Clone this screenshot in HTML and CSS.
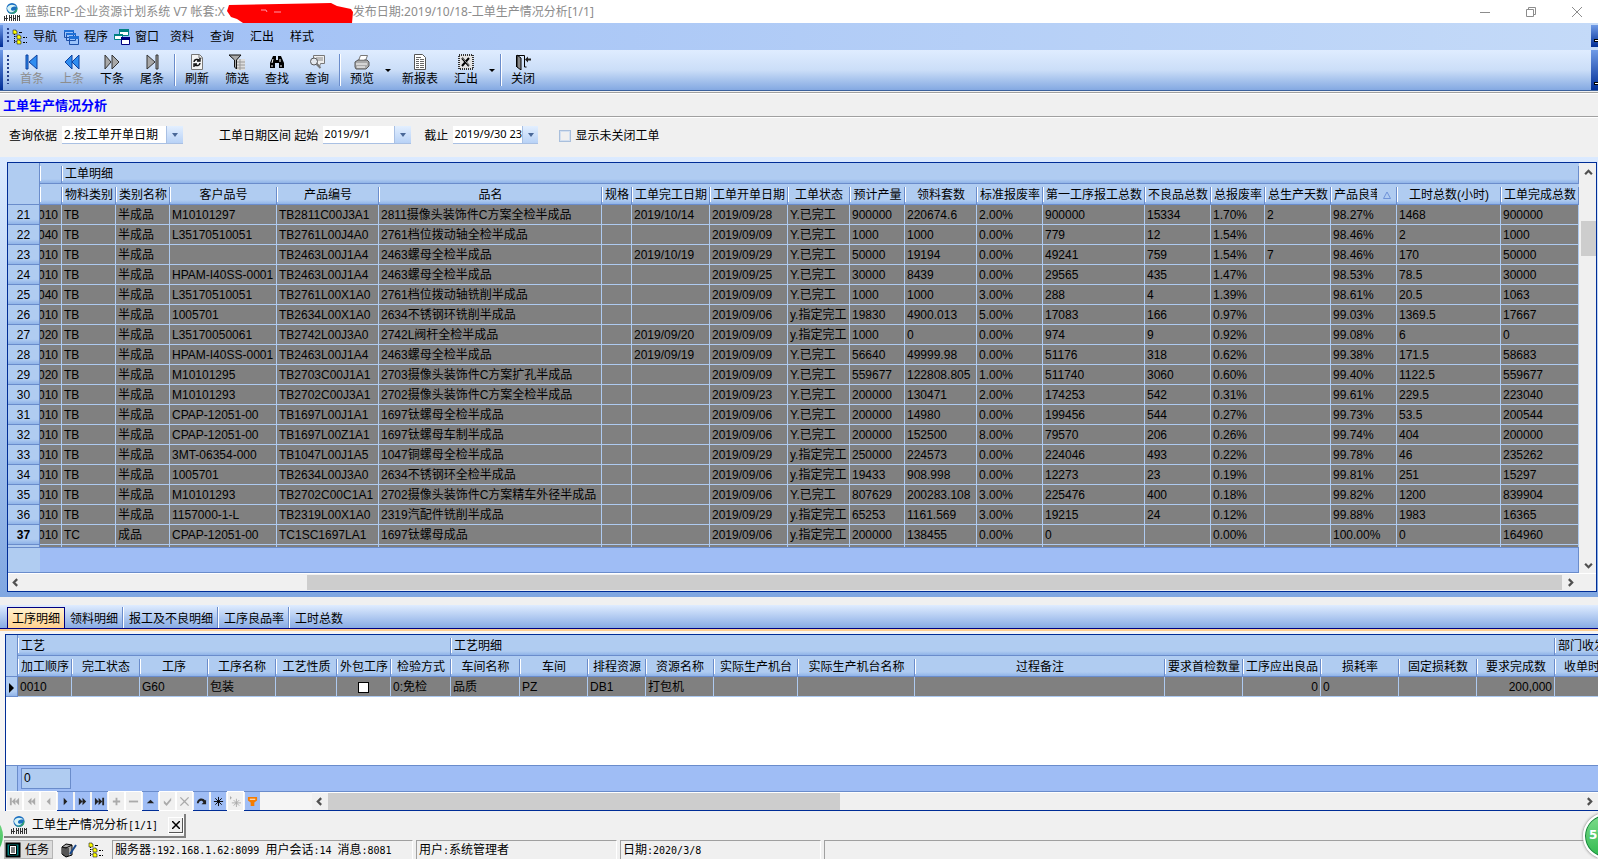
FILE: index.html
```html
<!DOCTYPE html>
<html lang="zh-CN">
<head>
    <meta charset="UTF-8">
    <meta name="viewport" content="width=device-width, initial-scale=1.0">
    <title>蓝鲸ERP-工单生产情况分析</title>
    <link rel="stylesheet" href="styles.css">
</head>
<body>
    <svg class="defs" aria-hidden="true">
        <symbol id="logo" viewBox="0 0 18 18">
            <circle cx="9" cy="5.500" r="5.500" fill="#1b6fc0"/>
            <path d="M4 5c2-4 7-4 10-1-3-1-6 0-6 2s2 2 4 1c-2 4-7 3-8-2z" fill="#d8f3f5"/>
            <path d="M5 9c4 2 8 0 9-5 2 5-4 9-9 5z" fill="#36a56a"/>
            <path d="M1.500 13v5M3.500 12v6M1 15.500h4M6.500 12v6M8.500 12v6M6 14.500h3M10.500 12v6M12.500 12v6M10 15.500h3M14.500 12v6M16.500 12v6M14 13.500h3" stroke="#333" fill="none"/>
        </symbol>
        <symbol id="tree" viewBox="0 0 16 16">
            <path d="M2.500 3v11M2.500 7.500h4M2.500 12.500h4" stroke="#000" stroke-dasharray="1 1" fill="none"/>
            <path d="M1 1h3v1h1v3H1zM5 6h3v1h1v3H5zM5 11h3v1h1v3H5z" fill="#ff0" stroke="#222" stroke-width=".6"/>
            <path d="M7 3.500h3M11 8.500h2M14 8.500h1M11 13.500h2M14 13.500h1" stroke="#000"/>
        </symbol>
    </svg>

    <header class="titlebar">
        <svg class="logo"><use href="#logo"/></svg>
        <span>蓝鲸ERP-企业资源计划系统 V7 帐套:X</span>
        <svg class="redact" viewBox="0 0 126 22"><path d="M2 2 104 0 110 3 124 6 126 9 125 20 88 21 70 20 16 20 10 16 4 14 0 8z" fill="#f00"/><path d="M34 7h5l1 2M47 9h7" stroke="#f9a" fill="none"/></svg>
        <span>发布日期:2019/10/18-工单生产情况分析[1/1]</span>
        <div class="win-btns">
            <button aria-label="最小化"><svg viewBox="0 0 12 12"><path d="M1 6.500h10"/></svg></button>
            <button aria-label="还原"><svg viewBox="0 0 12 12"><path d="M1.500 3.500h7v7h-7zM3.500 3.500v-2h7v7h-2"/></svg></button>
            <button aria-label="关闭窗口"><svg viewBox="0 0 12 12"><path d="M1 1l10 10M11 1L1 11"/></svg></button>
        </div>
    </header>

    <nav class="bar menubar">
        <i class="edge"></i>
        <i class="grip"></i>
        <button><svg><use href="#tree"/></svg>导航</button>
        <button><svg viewBox="0 0 16 16"><path d="M1.500 1.500h9v7h-9zM3.500 4.500h9v7h-9zM6.500 7.500h9v8h-9z" fill="#9cc3fa" stroke="#1c4fa8"/><path d="M1 1h10v2H1zM3 4h10v2H3zM6 7h10v3H6z" fill="#1f6fd6"/></svg>程序</button>
        <button><svg viewBox="0 0 16 16"><path d="M5.500.500h9v6h-9z" fill="#fff" stroke="#008080"/><path d="M5 0h10v3H5z" fill="#008080"/><path d="M.500 5.500h8v5h-8z" fill="#fff" stroke="#008080"/><path d="M0 5h9v2H0z" fill="#008080"/><path d="M7.500 8.500h8v7h-8z" fill="#fff" stroke="#000080"/><path d="M7 8h9v3H7z" fill="#000080"/></svg>窗口</button>
        <button class="plain">资料</button>
        <button class="plain">查询</button>
        <button class="plain">汇出</button>
        <button class="plain">样式</button>
        <i class="edge end"></i>
    </nav>

    <div class="bar toolbar">
        <i class="edge"></i>
        <i class="grip"></i>
        <button disabled><svg viewBox="0 0 16 16"><path d="M2 1h2v14H2zM13 1v14L5 8z" fill="#2f8df0" stroke="#0b3f9e"/></svg>首条</button>
        <button disabled><svg viewBox="0 0 16 16"><path d="M8 1v14L1 8zM15 1v14L8 8z" fill="#2f8df0" stroke="#0b3f9e"/></svg>上条</button>
        <button><svg viewBox="0 0 16 16"><path d="M1 1v14l6-7zM8 1v14l7-7z" fill="#a8a8a8" stroke="#333"/></svg>下条</button>
        <button><svg viewBox="0 0 16 16"><path d="M3 1v14l8-7zM12 1h2v14h-2z" fill="#a8a8a8" stroke="#333"/></svg>尾条</button>
        <i class="sep"></i>
        <button><svg viewBox="0 0 16 16"><path d="M2.500.500h8l3 3v12h-11z" fill="#f4f4f4" stroke="#777"/><path d="M10 1v3h3" fill="none" stroke="#777"/><path d="M5 8c0-3 4-3 5-2M11 4v3H8M11 9c0 3-4 3-5 2M5 13v-3h3" fill="none" stroke="#111" stroke-width="1.400"/></svg>刷新</button>
        <button><svg viewBox="0 0 16 16"><path d="M7 5h9v11H7z" fill="#ddd"/><path d="M7 8h9M7 11h9M7 14h9M11 5v11" stroke="#999"/><path d="M0 1h12L7.500 6v9l-2-2V6z" fill="#aaa" stroke="#111"/></svg>筛选</button>
        <button><svg viewBox="0 0 16 16"><path d="M4 2h3v4h2V2h3l3 7v5h-5V9H6v5H1V9z" fill="#000"/><path d="M4 5 3 9M11 5v3M3 11v2M12 11v2" stroke="#fff"/></svg>查找</button>
        <button><svg viewBox="0 0 16 16"><path d="M4.500 1.500h11v8h-4l-1 3-2-3h-4z" fill="#eee" stroke="#777"/><path d="M7 4h7M8 6h6" stroke="#888"/><circle cx="5" cy="7.500" r="3.500" fill="#e4e8ee" stroke="#555"/><path d="M7.500 10l4 4" stroke="#777" stroke-width="2"/></svg>查询</button>
        <i class="sep"></i>
        <button><svg viewBox="0 0 16 16"><path d="M4.500 6.500l2-5h7l-2 5z" fill="#fff" stroke="#777"/><path d="M1 8l3-2h9l2 2v4l-3 3H2l-1-2z" fill="#aaa" stroke="#555"/><path d="M2 10h11M3 13h8M7 3h4M6 5h4" stroke="#fff"/></svg>预览</button>
        <button class="drop" aria-label="预览选项"></button>
        <button class="wide"><svg viewBox="0 0 16 16"><path d="M2.500.500h8l3 3v12h-11z" fill="#fff" stroke="#555"/><path d="M4 5.500h3M8 5.500h4M4 7.500h3M8 7.500h4M4 9.500h3M8 9.500h4M4 11.500h3M8 11.500h4M4 13.500h3M8 13.500h4M4 3.500h5" stroke="#666"/></svg>新报表</button>
        <button><svg viewBox="0 0 16 16"><path d="M1 1h14v14H1z" fill="#e4e4e4" stroke="#333" stroke-width="2" stroke-dasharray="1 1"/><path d="M4 4l7 8M11 4l-7 8" stroke="#000" stroke-width="2"/><path d="M4.500 4l7 8" stroke="#fff" stroke-width=".6"/></svg>汇出</button>
        <button class="drop" aria-label="汇出选项"></button>
        <i class="sep"></i>
        <button><svg viewBox="0 0 16 16"><path d="M1.500 13V1.500h8V13h2" fill="none" stroke="#000"/><path d="M2 1l4 3v12l-4-3z" fill="#888" stroke="#000"/><path d="M10 5.500l3-3v2h3v2h-3v2z" fill="#222"/></svg>关闭</button>
        <i class="edge end"></i>
    </div>

    <h1 class="page-title">工单生产情况分析</h1>

    <form class="filters">
        <label for="basis">查询依据</label>
        <div class="combo basis">
            <select id="basis"><option>2.按工单开单日期</option></select>
            <i class="arrow"></i>
        </div>
        <label for="from">工单日期区间 起始</label>
        <div class="combo date from">
            <input id="from" type="text" value="2019/9/1">
            <button type="button" class="arrow" aria-label="选择起始日期"></button>
        </div>
        <label for="to">截止</label>
        <div class="combo date to">
            <input id="to" type="text" value="2019/9/30 23:59:59">
            <button type="button" class="arrow" aria-label="选择截止日期"></button>
        </div>
        <label class="check"><input type="checkbox">显示未关闭工单</label>
    </form>

    <section class="orders">
        <div class="grid-box">
            <div class="grid-row">
                <div class="grid-main">
                    <table class="grid" id="orders"></table>
                    <div class="summary"><i></i></div>
                </div>
                <div class="vscroll">
                    <svg viewBox="0 0 8 8"><path d="M1 5.500l3-3 3 3"/></svg>
                    <i></i>
                    <svg viewBox="0 0 8 8"><path d="M1 2.500l3 3 3-3"/></svg>
                </div>
            </div>
            <div class="hscroll">
                <svg viewBox="0 0 8 8"><path d="M5.500 1l-3 3 3 3"/></svg>
                <i></i>
                <svg viewBox="0 0 8 8"><path d="M2.500 1l3 3-3 3"/></svg>
            </div>
        </div>
    </section>

    <nav class="tabs">
        <button class="active">工序明细</button>
        <button>领料明细</button>
        <button>报工及不良明细</button>
        <button>工序良品率</button>
        <button>工时总数</button>
    </nav>

    <section class="detail">
        <div class="detail-box">
            <div class="detail-body">
                <table class="grid" id="process"></table>
            </div>
            <div class="summary detail-sum"><i></i><output>0</output></div>
            <div class="nav-row">
                <div class="navigator">
                    <button disabled aria-label="首笔"><svg viewBox="0 0 12 12"><path d="M1 2h2v8H1zM7 2v8L3 6zM11 2v8L7 6z"/></svg></button>
                    <button disabled aria-label="上页"><svg viewBox="0 0 12 12"><path d="M6 2v8L2 6zM10 2v8L6 6z"/></svg></button>
                    <button disabled aria-label="上笔"><svg viewBox="0 0 12 12"><path d="M8 2v8L4 6z"/></svg></button>
                    <button aria-label="下笔"><svg viewBox="0 0 12 12"><path d="M4 2v8l4-4z"/></svg></button>
                    <button aria-label="下页"><svg viewBox="0 0 12 12"><path d="M2 2v8l4-4zM6 2v8l4-4z"/></svg></button>
                    <button aria-label="末笔"><svg viewBox="0 0 12 12"><path d="M1 2v8l4-4zM5 2v8l4-4zM9 2h2v8H9z"/></svg></button>
                    <button disabled aria-label="新增"><svg viewBox="0 0 12 12"><path d="M5 2h2v3h3v2H7v3H5V7H2V5h3z"/></svg></button>
                    <button disabled aria-label="删除"><svg viewBox="0 0 12 12"><path d="M1 5h10v2H1z"/></svg></button>
                    <button aria-label="编辑"><svg viewBox="0 0 12 12"><path d="M2 8h8L6 4z"/></svg></button>
                    <button disabled aria-label="保存"><svg viewBox="0 0 12 12"><path d="M2 5l3 3 5-6v3l-5 6-3-3z"/></svg></button>
                    <button disabled aria-label="取消"><svg viewBox="0 0 12 12"><path d="M2 1l4 4 4-4 1 1-4 4 4 4-1 1-4-4-4 4-1-1 4-4-4-4z"/></svg></button>
                    <button aria-label="刷新明细"><svg viewBox="0 0 12 12"><path d="M1 8c0-6 7-7 9-3l1-1v5H6l2-2c-1-3-5-2-5 1z"/></svg></button>
                    <button aria-label="书签"><svg viewBox="0 0 12 12"><path d="M6 1v10M1 6h10M2.500 2.500l7 7M9.500 2.500l-7 7" stroke="#000"/></svg></button>
                    <button disabled aria-label="跳至书签"><svg viewBox="0 0 12 12"><path d="M0 0v4l2-2z"/><path d="M7 3v9M2 7.500h10M4 4.500l6 6M10 4.500l-6 6" stroke="#aaa"/></svg></button>
                    <button aria-label="筛选明细"><svg class="orange" viewBox="0 0 12 12"><path d="M1 1h10v4L8 7v4H4V7L1 5z"/><path d="M3 3h6v1H3z" fill="#fff"/></svg></button>
                </div>
                <div class="hscroll">
                    <svg viewBox="0 0 8 8"><path d="M5.500 1l-3 3 3 3"/></svg>
                    <i></i>
                    <svg viewBox="0 0 8 8"><path d="M2.500 1l3 3-3 3"/></svg>
                </div>
            </div>
        </div>
    </section>

    <div class="window-tabs">
        <div class="window-tab">
            <svg class="logo"><use href="#logo"/></svg>
            <span>工单生产情况分析<b>[1/1]</b></span>
            <button aria-label="关闭页签"><svg viewBox="0 0 8 8"><path d="M0 0l8 8M8 0L0 8" stroke="#000" stroke-width="1.500"/></svg></button>
        </div>
    </div>

    <footer class="statusbar">
        <button class="task"><svg viewBox="0 0 16 16"><path d="M1.500 1.500h13v13h-13z" fill="#008080" stroke="#000" stroke-width="2"/><path d="M4.500 3.500h7v9h-7z" fill="#fff" stroke="#000"/><path d="M6 6h4M6 8h4M6 10h4" stroke="#000"/></svg>任务</button>
        <div class="tools">
            <button aria-label="日志"><svg viewBox="0 0 16 16"><path d="M1 5l4-3 6 1v10l-6 2-4-3z" fill="#aaa" stroke="#000"/><path d="M5 5v10M1 5l4 1 6-3M3 6v8M7 6v8" stroke="#000" fill="none"/><path d="M15 3l-6 9" stroke="#17478a" stroke-width="2"/></svg></button>
            <button aria-label="导航树"><svg><use href="#tree"/></svg></button>
        </div>
        <div class="panel server">服务器<b>:192.168.1.62:8099 </b>用户会话<b>:14 </b>消息<b>:8081</b></div>
        <div class="panel">用户<b>:</b>系统管理者</div>
        <div class="panel">日期<b>:2020/3/8</b></div>
        <div class="panel rest"></div>
    </footer>

    <div class="ball left"></div>
    <div class="ball right">57</div>

    <script src="script.js"></script>
</body>
</html>
```
FILE: styles.css
```css
* {
    box-sizing: border-box;
}

body {
    margin: 0;
    height: 100vh;
    display: flex;
    flex-direction: column;
    overflow: hidden;
    position: relative;
    background: #f0f0f0;
    color: #000;
    font: 12px/16px "Liberation Sans", "Noto Sans CJK SC", sans-serif;
}

body > * {
    flex: none;
}

button,
input,
select {
    font: inherit;
    color: inherit;
    border: 0;
    border-radius: 0;
    padding: 0;
    margin: 0;
    background: none;
}

svg {
    display: block;
    flex: none;
    width: 16px;
    height: 16px;
}

.defs {
    position: absolute;
    width: 0;
    height: 0;
}

.logo {
    width: 18px;
    height: 18px;
}

/* title bar */
.titlebar {
    display: flex;
    align-items: center;
    height: 23px;
    padding-left: 3px;
    background: #fff;
    color: #8c8c8c;
    font-family: "Noto Sans", "Noto Sans CJK SC", sans-serif;
    white-space: nowrap;
}

.titlebar .logo {
    margin-right: 4px;
}

.redact {
    width: 126px;
    height: 22px;
    margin: 4px 0 0 2px;
}

.win-btns {
    display: flex;
    margin-left: auto;
}

.win-btns button {
    width: 46px;
    padding-left: 19px;
}

.win-btns svg {
    width: 12px;
    height: 12px;
    fill: none;
    stroke: #8c8c8c;
}

/* menu and toolbar */
.bar {
    display: flex;
    align-items: center;
}

.edge {
    align-self: stretch;
    width: 3px;
    margin-right: 1px;
    background: linear-gradient(#6f9ae6, #002d96);
}

.edge.end {
    width: 7px;
    margin: 0 0 0 auto;
    background:
        linear-gradient(#fff, #fff) 4px calc(100% - 6px) / 3px 1px no-repeat,
        linear-gradient(#000, #000) 3px calc(100% - 5px) / 4px 3px no-repeat,
        linear-gradient(#6f9ae6, #002d96);
}

.grip {
    width: 8px;
    align-self: stretch;
    margin: 5px 0 6px;
    background: repeating-linear-gradient(#27418b 0 2px, transparent 2px 4px) 3px 0 / 2px 100% no-repeat;
}

.menubar {
    height: 27px;
    background: linear-gradient(90deg, #9ebef5, #c4daf8);
}

.menubar .edge {
    margin-top: 2px;
    margin-bottom: 3px;
}

.menubar button {
    display: flex;
    align-items: center;
    gap: 5px;
    width: 51px;
}

.menubar button.plain {
    width: 40px;
    padding-left: 5px;
}

.toolbar {
    height: 41px;
    background: linear-gradient(#dfecff, #cbdef8 50%, #84a9e2);
    border-bottom: 1px solid #3b619c;
}

.toolbar button {
    width: 40px;
    height: 36px;
    padding-top: 2px;
    display: flex;
    flex-direction: column;
    align-items: center;
    line-height: 18px;
}

.toolbar button:disabled {
    color: #8d8d8d;
}

.toolbar button.wide {
    width: 52px;
}

.toolbar button.drop {
    width: 12px;
    padding: 0;
    justify-content: center;
}

.drop::after {
    content: "";
    border: 3px solid transparent;
    border-top-color: #000;
    border-bottom: 0;
}

.sep {
    width: 5px;
    height: 32px;
    background: linear-gradient(90deg, #6a8ccb 50%, #fff 50%) 2px 0 / 2px 100% no-repeat;
}

.page-title {
    margin: 1px 0 0;
    padding-left: 3px;
    border-top: 1px solid #a0a0a0;
    border-bottom: 1px solid #a0a0a0;
    box-shadow: inset 0 1px #fff, 0 1px #fff;
    font-size: 13px;
    line-height: 26px;
    height: 25px;
    color: #00f;
}

/* filters */
.filters {
    display: flex;
    align-items: center;
    height: 40px;
    padding: 0 9px 4px;
}

.filters label {
    padding-top: 2px;
}

.combo {
    display: flex;
    height: 18px;
    margin-left: 5px;
    background: #fff;
    border-bottom: 1px solid #a9c0e3;
}

.combo select,
.combo input {
    flex: 1;
    min-width: 0;
    padding-left: 2px;
    appearance: none;
    outline: 0;
}

.basis {
    width: 121px;
    margin-right: 36px;
}

.date {
    font-family: "Noto Sans", sans-serif;
    font-size: 11px;
}

.date input {
    padding: 0 0 2px 1px;
}

.from {
    width: 88px;
    margin-right: 13px;
}

.to {
    width: 85px;
    margin-right: 21px;
}

.arrow {
    flex: none;
    width: 17px;
    display: flex;
    align-items: center;
    justify-content: center;
    background: linear-gradient(#e3efff, #b8d2f6);
    border-left: 1px solid #a9c0e3;
}

.to .arrow {
    width: 16px;
}

.arrow::after {
    content: "";
    border: 3px solid transparent;
    border-top: 4px solid #4a6898;
    border-bottom: 0;
}

.check {
    display: flex;
    align-items: center;
    gap: 4px;
}

.check input {
    appearance: none;
    width: 12px;
    height: 12px;
    border: 1px solid #a9bfdc;
    box-shadow: inset 0 0 0 1px #d4e0f0;
}

/* grids */
.grid {
    table-layout: fixed;
    border-collapse: separate;
    border-spacing: 0;
    width: 1px;
}

.grid th,
.grid td {
    padding: 2px 2px 0;
    line-height: 17px;
    white-space: nowrap;
    overflow: hidden;
    text-align: left;
    font-weight: normal;
}

.grid td {
    background: #808080;
    border-right: 1px solid #aecaf0;
    border-bottom: 1px solid #aecaf0;
}

.grid thead th {
    line-height: 18px;
    padding: 2px 0 0;
    text-align: center;
    border-bottom: 1px solid #6a8ccb;
    background:
        linear-gradient(#6a8ccb, #6a8ccb) right 3px / 1px 17px no-repeat,
        linear-gradient(#fff, #fff) 0 3px / 1px 15px no-repeat,
        linear-gradient(#b0ccf1 80%, #8fb3e8);
}

.grid thead th.band {
    text-align: left;
    padding-left: 3px;
}

.grid thead th.corner {
    background: #b0ccf1;
    border-right: 1px solid #6a8ccb;
}

.grid tbody th {
    text-align: center;
    border-right: 1px solid #6a8ccb;
    border-bottom: 1px solid #6a8ccb;
    background: linear-gradient(#b0ccf1 75%, #8fb3e8);
}

.grid tr.current th {
    font-weight: bold;
}

.grid tr.partial td,
.grid tr.partial th {
    height: 2px;
    padding: 0;
    line-height: 2px;
    border-bottom: 0;
}

.grid .num {
    text-align: right;
}

/* scrolled column, only its right part is in view */
.grid .cut {
    direction: rtl;
    padding-right: 4px;
}

.sorted {
    display: flex;
    align-items: center;
    padding-left: 3px;
}

.sorted span {
    width: 43px;
    overflow: hidden;
}

.sorted svg {
    width: 8px;
    height: 8px;
    margin-left: 6px;
    fill: none;
    stroke: #6f93d8;
}

.summary {
    display: flex;
    height: 27px;
    background: #9fbdf5;
    border: 1px solid #6a8ccb;
    border-left: 0;
}

.summary i {
    width: 32px;
    background: #b0ccf1;
}

.orders {
    padding: 5px 1px 5px 7px;
    background: linear-gradient(#dbeaff, #80a7e1);
}

.grid-box {
    border: 1px solid #002d96;
    background: #f0f0f0;
}

.grid-row {
    display: flex;
}

.grid-main {
    flex: 1;
    min-width: 0;
    overflow: hidden;
    background: #9fbdf5;
}

.grid-main .summary {
    height: 26px;
}

.vscroll {
    width: 17px;
    display: flex;
    flex-direction: column;
    align-items: center;
    padding: 5px 0 3px 1px;
    background: #f0f0f0;
}

.vscroll i {
    width: 15px;
    height: 35px;
    margin: 44px 0 auto;
    background: #cdcdcd;
}

.vscroll svg,
.hscroll svg {
    width: 9px;
    height: 9px;
    fill: none;
    stroke: #505050;
    stroke-width: 2;
}

.hscroll {
    display: flex;
    align-items: center;
    height: 18px;
    padding: 0 21px 1px 3px;
    border-top: 1px solid #fff;
    background: #f0f0f0;
}

.hscroll i {
    flex: 1;
    height: 15px;
    margin: 0 4px 0 287px;
    background: #cdcdcd;
}

/* detail tabs */
.tabs {
    display: flex;
    align-items: flex-end;
    margin-top: 8px;
    padding-left: 7px;
    height: 24px;
    background: linear-gradient(#dfecff, #88abe4);
    border-bottom: 1px solid #000080;
}

.tabs button {
    height: 21px;
    padding: 3px 5px 0;
    border-right: 1px solid #fff;
    box-shadow: inset -1px 0 #6a8ccb;
}

.tabs button:last-child {
    border: 0;
    box-shadow: none;
}

.tabs button.active {
    border: 1px solid #000080;
    border-bottom: 0;
    box-shadow: none;
    background: linear-gradient(#fff2cf, #ffd08e);
    padding: 2px 4px 0;
}

.detail {
    flex: 1;
    display: flex;
    flex-direction: column;
    padding: 3px 0 0 5px;
    border-top: 2px solid #ffcf91;
    background: #f5f5f5;
    min-height: 0;
}

.detail-box {
    flex: 1;
    display: flex;
    flex-direction: column;
    min-height: 0;
    border: 1px solid #002d96;
    border-right: 0;
}

.detail-body {
    flex: 1;
    overflow: hidden;
    background: #fff;
}

#process input {
    display: block;
    margin: auto;
    appearance: none;
    width: 11px;
    height: 11px;
    background: #fff;
    border: 1px solid #000;
}

.marker {
    display: block;
    width: 0;
    margin: auto;
    border: 5px solid transparent;
    border-left-color: #000;
    border-right: 0;
}

.detail-sum {
    border-right: 0;
}

.detail-sum i {
    width: 12px;
    border-right: 1px solid #6a8ccb;
}

.detail-sum output {
    width: 50px;
    height: 21px;
    margin: 2px 3px;
    padding-left: 2px;
    line-height: 19px;
    border: 1px solid #6a8ccb;
    background: #b0ccf1;
}

.nav-row {
    display: flex;
    height: 18px;
}

.navigator {
    display: flex;
    gap: 2px;
    padding: 0 0 0 1px;
    width: 306px;
}

.navigator button {
    width: 15px;
    display: flex;
    align-items: center;
    justify-content: center;
    background: #9fbdf5;
}

.navigator button:disabled {
    background: #f0f0f0;
    box-shadow: 0 0 0 1px #fff;
}

.navigator svg {
    width: 11px;
    height: 11px;
    fill: #222;
}

.navigator button:disabled svg {
    fill: #aaa;
}

.navigator svg.orange {
    fill: #f57c00;
}

.nav-row .hscroll {
    flex: 1;
    padding-right: 4px;
    padding-bottom: 0;
}

.nav-row .hscroll i {
    flex: 0 1 512px;
    height: 17px;
    margin: 0 auto 0 4px;
}

/* open windows and status bar */
.window-tabs {
    height: 29px;
    padding: 3px 0 0 4px;
}

.window-tab {
    display: flex;
    align-items: center;
    width: 182px;
    height: 24px;
    padding-left: 6px;
    border-right: 2px solid #808080;
    border-bottom: 2px solid #808080;
    white-space: nowrap;
}

.window-tab span {
    margin: 0 11px 0 4px;
}

.window-tab b,
.panel b {
    font: 10px/16px "DejaVu Sans Mono", monospace;
    white-space: pre;
}

.window-tab button {
    width: 14px;
    height: 15px;
    display: flex;
    align-items: center;
    justify-content: center;
    border-right: 1px solid #555;
    border-bottom: 1px solid #555;
    box-shadow: 0 0 0 1px #fff;
}

.window-tab button svg {
    width: 8px;
    height: 8px;
}

.statusbar {
    display: flex;
    height: 19px;
    gap: 3px;
    padding-left: 4px;
}

.task {
    width: 49px;
    display: flex;
    align-items: center;
    gap: 4px;
    padding-left: 1px;
    background: #dcdcdc;
    box-shadow: inset 0 0 0 1px #b4b4b4;
}

.tools {
    width: 53px;
    display: flex;
    align-items: center;
    gap: 11px;
    padding-left: 5px;
}

.panel {
    width: 201px;
    padding: 1px 0 0 2px;
    border-left: 1px solid #a0a0a0;
    border-top: 1px solid #a0a0a0;
    border-right: 1px solid #fff;
    white-space: nowrap;
}

.panel.server {
    width: 301px;
}

.panel.rest {
    flex: 1;
}

/* floating speed ball */
.ball {
    position: absolute;
    bottom: 0;
    width: 46px;
    height: 46px;
    border-radius: 50%;
    background: linear-gradient(#7fdc8c, #2fb94e);
    color: #fff;
    font: bold 12px/40px "DejaVu Sans", sans-serif;
    padding-left: 4px;
}

.ball.right {
    right: -31px;
    border: 2px solid #fff;
    box-shadow: inset 0 0 0 1px #14803a, 0 0 3px #666;
}

.ball.left {
    left: -43px;
}
```
FILE: script.js
```js
// 上方工单表: [表头, 列宽]
const orderCols = [
    ['', 22], ['物料类别', 54], ['类别名称', 54], ['客户品号', 107], ['产品编号', 102],
    ['品名', 223], ['规格', 30], ['工单完工日期', 78], ['工单开单日期', 78], ['工单状态', 62],
    ['预计产量', 55], ['领料套数', 72], ['标准报废率', 66], ['第一工序报工总数', 102],
    ['不良品总数', 66], ['总报废率', 54], ['总生产天数', 66], ['产品良率', 66],
    ['工时总数(小时)', 104], ['工单完成总数', 78]
];

const Y = 'Y.已完工';
const y = 'y.指定完工';

const orders = [
    ['0010', 'TB', '半成品', 'M10101297', 'TB2811C00J3A1', '2811摄像头装饰件C方案全检半成品', '', '2019/10/14', '2019/09/28', Y, '900000', '220674.6', '2.00%', '900000', '15334', '1.70%', '2', '98.27%', '1468', '900000'],
    ['0040', 'TB', '半成品', 'L35170510051', 'TB2761L00J4A0', '2761档位拨动轴全检半成品', '', '', '2019/09/09', Y, '1000', '1000', '0.00%', '779', '12', '1.54%', '', '98.46%', '2', '1000'],
    ['0010', 'TB', '半成品', '', 'TB2463L00J1A4', '2463螺母全检半成品', '', '2019/10/19', '2019/09/29', Y, '50000', '19194', '0.00%', '49241', '759', '1.54%', '7', '98.46%', '170', '50000'],
    ['0010', 'TB', '半成品', 'HPAM-I40SS-0001', 'TB2463L00J1A4', '2463螺母全检半成品', '', '', '2019/09/25', Y, '30000', '8439', '0.00%', '29565', '435', '1.47%', '', '98.53%', '78.5', '30000'],
    ['0040', 'TB', '半成品', 'L35170510051', 'TB2761L00X1A0', '2761档位拨动轴铣削半成品', '', '', '2019/09/09', Y, '1000', '1000', '3.00%', '288', '4', '1.39%', '', '98.61%', '20.5', '1063'],
    ['0010', 'TB', '半成品', '1005701', 'TB2634L00X1A0', '2634不锈钢环铣削半成品', '', '', '2019/09/06', y, '19830', '4900.013', '5.00%', '17083', '166', '0.97%', '', '99.03%', '1369.5', '17667'],
    ['0020', 'TB', '半成品', 'L35170050061', 'TB2742L00J3A0', '2742L阀杆全检半成品', '', '2019/09/20', '2019/09/09', y, '1000', '0', '0.00%', '974', '9', '0.92%', '', '99.08%', '6', '0'],
    ['0010', 'TB', '半成品', 'HPAM-I40SS-0001', 'TB2463L00J1A4', '2463螺母全检半成品', '', '2019/09/19', '2019/09/09', Y, '56640', '49999.98', '0.00%', '51176', '318', '0.62%', '', '99.38%', '171.5', '58683'],
    ['0020', 'TB', '半成品', 'M10101295', 'TB2703C00J1A1', '2703摄像头装饰件C方案扩孔半成品', '', '', '2019/09/09', Y, '559677', '122808.805', '1.00%', '511740', '3060', '0.60%', '', '99.40%', '1122.5', '559677'],
    ['0010', 'TB', '半成品', 'M10101293', 'TB2702C00J3A1', '2702摄像头装饰件C方案全检半成品', '', '', '2019/09/23', Y, '200000', '130471', '2.00%', '174253', '542', '0.31%', '', '99.61%', '229.5', '223040'],
    ['0010', 'TB', '半成品', 'CPAP-12051-00', 'TB1697L00J1A1', '1697钛螺母全检半成品', '', '', '2019/09/06', Y, '200000', '14980', '0.00%', '199456', '544', '0.27%', '', '99.73%', '53.5', '200544'],
    ['0010', 'TB', '半成品', 'CPAP-12051-00', 'TB1697L00Z1A1', '1697钛螺母车制半成品', '', '', '2019/09/06', Y, '200000', '152500', '8.00%', '79570', '206', '0.26%', '', '99.74%', '404', '200000'],
    ['0010', 'TB', '半成品', '3MT-06354-000', 'TB1047L00J1A5', '1047铜螺母全检半成品', '', '', '2019/09/29', y, '250000', '224573', '0.00%', '224046', '493', '0.22%', '', '99.78%', '46', '235262'],
    ['0010', 'TB', '半成品', '1005701', 'TB2634L00J3A0', '2634不锈钢环全检半成品', '', '', '2019/09/06', y, '19433', '908.998', '0.00%', '12273', '23', '0.19%', '', '99.81%', '251', '15297'],
    ['0010', 'TB', '半成品', 'M10101293', 'TB2702C00C1A1', '2702摄像头装饰件C方案精车外径半成品', '', '', '2019/09/06', Y, '807629', '200283.108', '3.00%', '225476', '400', '0.18%', '', '99.82%', '1200', '839904'],
    ['0010', 'TB', '半成品', '1157000-1-L', 'TB2319L00X1A0', '2319汽配件铣削半成品', '', '', '2019/09/29', y, '65253', '1161.569', '3.00%', '19215', '24', '0.12%', '', '99.88%', '1983', '16365'],
    ['0010', 'TC', '成品', 'CPAP-12051-00', 'TC1SC1697LA1', '1697钛螺母成品', '', '', '2019/09/06', y, '200000', '138455', '0.00%', '0', '', '0.00%', '', '100.00%', '0', '164960']
];

// 下方工序明细
const processCols = [
    ['加工顺序', 54], ['完工状态', 68], ['工序', 68], ['工序名称', 68], ['工艺性质', 61],
    ['外包工序', 54], ['检验方式', 60], ['车间名称', 69], ['车间', 68], ['排程资源', 58],
    ['资源名称', 68], ['实际生产机台', 84], ['实际生产机台名称', 117], ['过程备注', 250],
    ['要求首检数量', 78], ['工序应出良品', 78], ['损耗率', 78], ['固定损耗数', 78],
    ['要求完成数', 78], ['收单时间', 66]
];

const processRow = ['0010', '', 'G60', '包装', '', '<input type="checkbox" aria-label="外包工序">', '0:免检', '品质', 'PZ', 'DB1',
    '打包机', '', '', '', '', '0', '0', '', '200,000', ''];

const sortMark = '<svg viewBox="0 0 8 8"><path d="M4 1L.5 7.500h7z"/></svg>';

function colgroup(first, cols) {
    return '<colgroup>' + [first].concat(cols.map(c => c[1])).map(w => `<col style="width:${w}px">`).join('') + '</colgroup>';
}

function headRow(cols) {
    return cols.map(c => c[0] === '产品良率'
        ? `<th><div class="sorted"><span>${c[0]}</span>${sortMark}</div></th>`
        : `<th>${c[0]}</th>`).join('');
}

function renderOrders() {
    const rows = orders.map((r, i) => `<tr class="${i === orders.length - 1 ? 'current' : ''}"><th>${21 + i}</th>`
        + r.map((v, n) => `<td${n === 0 ? ' class="cut"' : ''}>${v}</td>`).join('') + '</tr>').join('');
    document.getElementById('orders').innerHTML = colgroup(32, orderCols)
        + `<thead><tr><th class="corner" rowspan="2"></th><th></th><th class="band" colspan="${orderCols.length - 1}">工单明细</th></tr>`
        + `<tr>${headRow(orderCols)}</tr></thead>`
        + `<tbody>${rows}<tr class="partial"><th></th>${'<td></td>'.repeat(orderCols.length)}</tr></tbody>`;
}

function renderProcess() {
    const numeric = [15, 18];
    document.getElementById('process').innerHTML = colgroup(12, processCols)
        + '<thead><tr><th class="corner" rowspan="2"></th><th class="band" colspan="7">工艺</th><th class="band" colspan="12">工艺明细</th><th class="band">部门收发</th></tr>'
        + `<tr>${headRow(processCols)}</tr></thead>`
        + '<tbody><tr><th><i class="marker"></i></th>'
        + processRow.map((v, n) => `<td${numeric.includes(n) ? ' class="num"' : ''}>${v}</td>`).join('') + '</tr></tbody>';
}

renderOrders();
renderProcess();
```
